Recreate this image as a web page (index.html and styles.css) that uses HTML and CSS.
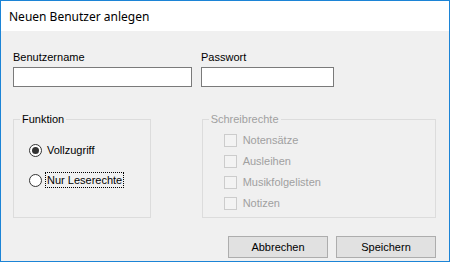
FILE: index.html
```html
<!DOCTYPE html>
<html lang="de">
<head>
<meta charset="utf-8">
<title>Neuen Benutzer anlegen</title>
<link rel="stylesheet" href="styles.css">
</head>
<body>
<div class="window">
  <div class="titlebar">Neuen Benutzer anlegen</div>
  <div class="content">
    <div class="fields">
      <div class="field field-user">
        <label class="label">Benutzername</label>
        <div class="textbox"></div>
      </div>
      <div class="field field-pass">
        <label class="label">Passwort</label>
        <div class="textbox"></div>
      </div>
    </div>
    <div class="groups">
      <fieldset class="group group-func">
        <legend class="legend">Funktion</legend>
        <div class="radios">
          <div class="option">
            <span class="radio checked"></span>
            <span class="opt-label">Vollzugriff</span>
          </div>
          <div class="option">
            <span class="radio"></span>
            <span class="opt-label focused">Nur Leserechte</span>
          </div>
        </div>
      </fieldset>
      <fieldset class="group group-rights disabled">
        <legend class="legend">Schreibrechte</legend>
        <div class="checks">
          <div class="check-row"><span class="checkbox"></span><span class="check-label">Notensätze</span></div>
          <div class="check-row"><span class="checkbox"></span><span class="check-label">Ausleihen</span></div>
          <div class="check-row"><span class="checkbox"></span><span class="check-label">Musikfolgelisten</span></div>
          <div class="check-row"><span class="checkbox"></span><span class="check-label">Notizen</span></div>
        </div>
      </fieldset>
    </div>
    <div class="buttons">
      <button class="btn">Abbrechen</button>
      <button class="btn">Speichern</button>
    </div>
  </div>
</div>
</body>
</html>
```
FILE: styles.css
```css
* { box-sizing: border-box; }
html, body { margin: 0; padding: 0; background: #ffffff; }
body {
  font-family: "Liberation Sans", Arial, sans-serif;
  font-size: 11px;
  color: #000;
}
.window {
  width: 450px;
  height: 262px;
  border: 1px solid #1c84d6;
  background: #f0f0f0;
  display: flex;
  flex-direction: column;
}
.titlebar {
  height: 30px;
  flex: none;
  background: #ffffff;
  display: flex;
  align-items: center;
  padding-left: 8px;
  font-family: "Noto Sans", "Open Sans", sans-serif;
  font-size: 12px;
  color: #000;
}
.content {
  padding: 20px 13px 0 12px;
  display: flex;
  flex-direction: column;
}
.fields { display: flex; gap: 9px; }
.field { display: flex; flex-direction: column; }
.field-user { width: 179px; }
.field-pass { width: 133px; }
.label { display: block; line-height: 13px; height: 13px; margin-bottom: 3px; }
.textbox { height: 20px; border: 1px solid #7a7a7a; background: #fff; }

.groups { display: flex; gap: 51px; margin-top: 26px; }
.group {
  margin: 0;
  padding: 0;
  border: 1px solid #dcdcdc;
  height: 105px;
  min-width: 0;
}
.group-func { width: 138px; }
.group-rights { width: 235px; }
.legend {
  margin-left: 6px;
  padding: 0 2px;
  line-height: 13px;
  height: 13px;
}
.radios { display: flex; flex-direction: column; gap: 14px; margin-top: 16px; padding-left: 15px; }
.option { display: flex; align-items: center; height: 16px; gap: 3px; }
.radio {
  width: 13px; height: 13px; border-radius: 50%;
  border: 1px solid #333;
  background: #fff;
  display: flex; align-items: center; justify-content: center;
  flex: none;
}
.radio.checked::after {
  content: "";
  width: 7px; height: 7px; border-radius: 50%;
  background: #333;
}
.opt-label {
  border: 1px dotted transparent;
  padding: 0 1px;
  line-height: 14px;
}
.opt-label.focused { border-color: #000; }

.disabled .legend, .disabled .check-label { color: #a0a0a0; }
.checks { display: flex; flex-direction: column; gap: 8px; margin-top: 8px; padding-left: 21px; }
.check-row { display: flex; align-items: center; height: 13px; gap: 6px; }
.checkbox {
  width: 13px; height: 13px; flex: none;
  border: 1px solid #cccccc;
  background: #f3f3f3;
}
.check-label { line-height: 13px; }

.buttons { display: flex; justify-content: flex-end; gap: 8px; margin-top: 18px; padding-right: 0; }
.btn {
  width: 100px; height: 22px;
  margin: 0;
  border: 1px solid #adadad;
  background: #e1e1e1;
  font-family: "Liberation Sans", Arial, sans-serif;
  font-size: 11px;
  color: #000;
  padding: 0;
}
```
